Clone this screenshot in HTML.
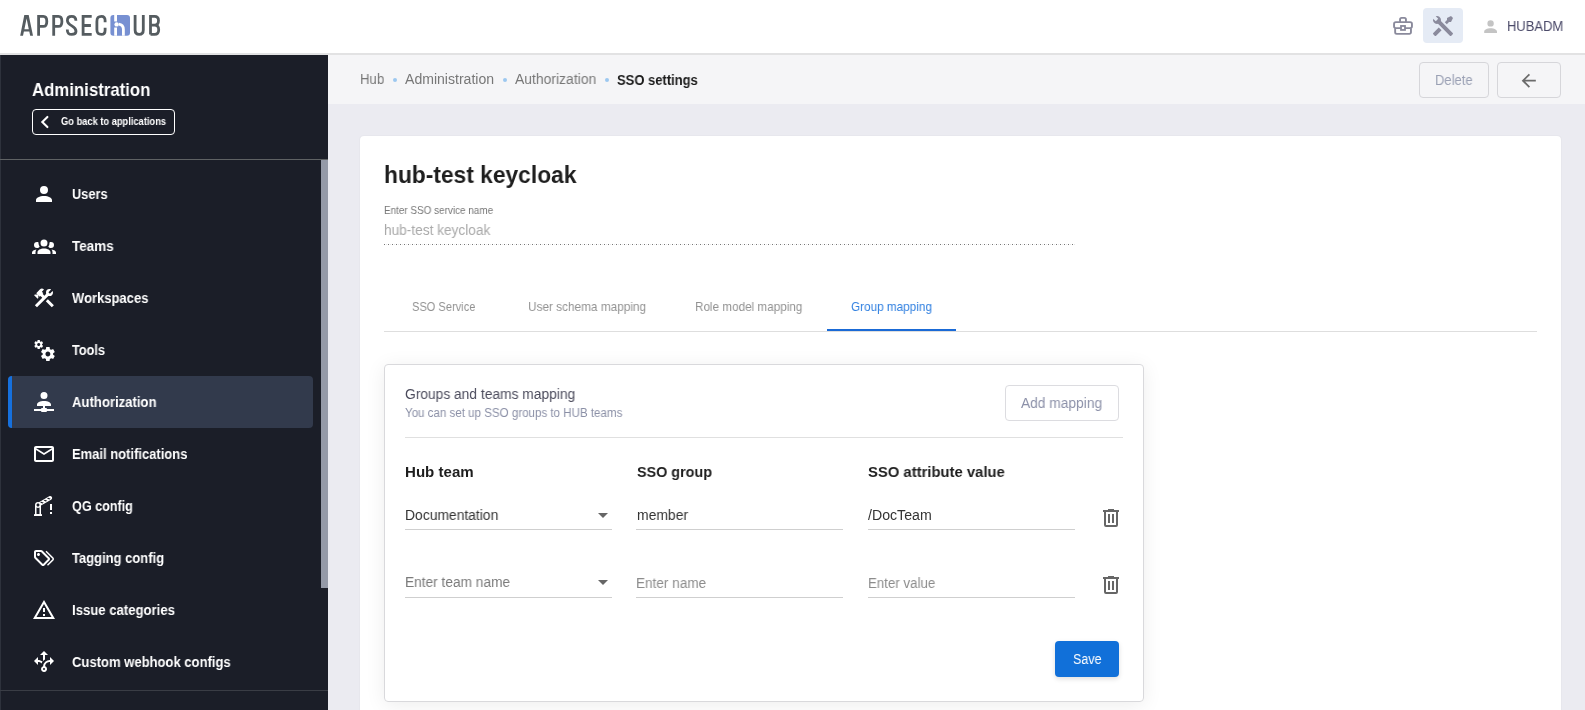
<!DOCTYPE html>
<html><head><meta charset="utf-8">
<style>
*{box-sizing:border-box;margin:0;padding:0}
html,body{width:1585px;height:710px;overflow:hidden;font-family:"Liberation Sans",sans-serif;background:#ebebf1;position:relative}
.a{position:absolute}
.t{position:absolute;white-space:nowrap;line-height:1;transform-origin:0 0;will-change:transform}
.ic{position:absolute;overflow:visible}
</style></head><body>
<!-- header -->
<div class="a" style="left:0;top:0;width:1585px;height:53px;background:#fff"></div>
<div class="a" style="left:0;top:53px;width:1585px;height:2px;background:#e2e2e3"></div>
<!-- logo -->
<svg class="a" style="left:0;top:0" width="170" height="50" viewBox="0 0 170 50">
  <path fill="#555c60" fill-rule="evenodd" d="M20.2 35.8 L24.3 15 L28.7 15 L33 35.8 L30.2 35.8 L29.3 31.6 L23.9 31.6 L23 35.8 Z M24.4 29.3 L28.8 29.3 L26.6 18.6 Z"/>
  <g fill="none" stroke="#555c60" stroke-width="2.8" stroke-linejoin="miter">
    <path d="M38.6 35.8 V16.4 H43.3 C46.4 16.4 46.8 18.6 46.8 21.4 C46.8 24.3 46.3 26.4 43.3 26.4 H38.6"/>
    <path d="M53.7 35.8 V16.4 H58.4 C61.5 16.4 61.9 18.6 61.9 21.4 C61.9 24.3 61.4 26.4 58.4 26.4 H53.7"/>
    <path d="M75.9 20.8 C75.9 17.8 74.6 16.4 71.7 16.4 C68.8 16.4 67.4 17.9 67.4 20.4 C67.4 23.1 69.4 24.4 71.9 25.9 C74.7 27.6 76 28.9 76 31.3 C76 33.9 74.5 34.4 71.7 34.4 C68.8 34.4 67.3 33.4 67.3 29.4"/>
    <path d="M91.7 16.4 H83.1 V34.4 H91.7 M83.1 25.5 H90.9"/>
    <path d="M105.1 22.3 V20.6 C105.1 17.6 104.2 16.4 101.5 16.4 C98.2 16.4 96.9 17.6 96.9 21.4 V29.6 C96.9 33.2 98.2 34.4 101.5 34.4 C104.2 34.4 105.1 33.2 105.1 30.2 V27.8"/>
    <path d="M135.1 15 V30 C135.1 33.3 136.3 34.4 139.2 34.4 C142.1 34.4 143.3 33.3 143.3 30 V15"/>
    <path d="M150.5 34.4 V16.4 H154.6 C157.5 16.4 158.5 17.9 158.5 20.5 C158.5 23.2 157.4 25.1 154.6 25.1 H150.5 M154.6 25.1 C157.8 25.1 158.7 27.2 158.7 29.8 C158.7 32.9 157.6 34.4 154.6 34.4 H150.5"/>
  </g>
  <rect x="110.4" y="15" width="19.6" height="20.8" rx="3" fill="#7790d2"/>
  <g stroke="#fff" stroke-width="2.8" fill="none">
    <path d="M115.6 15 V21.6 M115.6 27.6 V35.8"/>
    <path d="M118.8 24.1 C121.8 24.4 123.4 26.5 123.4 29.5 V35.8"/>
  </g>
  <circle cx="116.6" cy="24.4" r="2.2" fill="#fff"/>
</svg>
<!-- header right -->
<svg class="a" style="left:1380px;top:10px" width="40" height="30" viewBox="1380 10 40 30"><g fill="none" stroke="#8a8a9c" stroke-width="1.9"><path d="M1400.05 22.15 V19.4 a1.55 1.55 0 0 1 1.55 -1.55 h2.8 a1.55 1.55 0 0 1 1.55 1.55 V22.15"/><rect x="1394.05" y="22.15" width="17.9" height="6.0" rx="1.8"/><path d="M1395.15 28.15 V32.3 a1.55 1.55 0 0 0 1.55 1.55 h12.7 a1.55 1.55 0 0 0 1.55 -1.55 V28.15"/></g><rect x="1401" y="25.95" width="4" height="4" fill="#fff" stroke="#8a8a9c" stroke-width="1.8"/></svg>
<div class="a" style="left:1423px;top:8px;width:40px;height:35px;background:#e5ebf5;border-radius:4px"></div>
<svg class="ic" style="left:1431px;top:14px;width:24px;height:24px" viewBox="0 0 24 24"><path fill="#8a8a9c" d="m21.71 20.29-1.42 1.42a1 1 0 0 1-1.41 0L7 9.85A3.8 3.8 0 0 1 6 10a4 4 0 0 1-3.78-5.3l2.54 2.54.53-.53 1.42-1.42.53-.53L4.7 2.22A4 4 0 0 1 10 6a3.8 3.8 0 0 1-.15 1l11.86 11.88a1 1 0 0 1 0 1.41M2.29 18.88a1 1 0 0 0 0 1.41l1.42 1.42a1 1 0 0 0 1.41 0l5.47-5.46-2.83-2.83M20 2l-4 2v2l-2.17 2.17 2 2L18 8h2l2-4Z"/></svg>
<svg class="ic" style="left:1481.3px;top:17.2px;width:19.2px;height:19.2px" viewBox="0 0 24 24"><path fill="#c4c4c4" d="M12 4a4 4 0 0 1 4 4 4 4 0 0 1-4 4 4 4 0 0 1-4-4 4 4 0 0 1 4-4m0 10c4.42 0 8 1.79 8 4v2H4v-2c0-2.21 3.58-4 8-4"/></svg>

<!-- sidebar -->
<div class="a" style="left:0;top:55px;width:328px;height:655px;background:#1b1e28"></div>
<div class="a" style="left:0;top:55px;width:1px;height:655px;background:#2e323c"></div>
<div class="a" style="left:32px;top:109px;width:143px;height:26px;border:1px solid #fff;border-radius:4px"></div>
<svg class="a" style="left:0;top:0" width="80" height="140"><path d="M47.4 116.9 L42.3 122 L47.4 127.1" fill="none" stroke="#fff" stroke-width="2.1" stroke-linecap="round" stroke-linejoin="miter"/></svg>
<div class="a" style="left:0;top:159px;width:328px;height:1px;background:#5f6264"></div>
<div class="a" style="left:321px;top:160px;width:7px;height:428px;background:#959aa8"></div>
<div class="a" style="left:8px;top:376px;width:305px;height:52px;background:#323a4c;border-radius:4px"></div>
<div class="a" style="left:8px;top:376px;width:4px;height:52px;background:#1670dd;border-radius:4px 0 0 4px"></div>
<div class="a" style="left:0;top:690px;width:328px;height:1px;background:#3a3d45"></div>
<svg class="ic" style="left:32px;top:182px;width:24px;height:24px" viewBox="0 0 24 24"><path fill="#fff" d="M12 4a4 4 0 0 1 4 4 4 4 0 0 1-4 4 4 4 0 0 1-4-4 4 4 0 0 1 4-4m0 10c4.42 0 8 1.79 8 4v2H4v-2c0-2.21 3.58-4 8-4"/></svg>
<svg class="ic" style="left:32px;top:234px;width:24px;height:24px" viewBox="0 0 24 24"><path fill="#fff" d="M12 5.5A3.5 3.5 0 0 1 15.5 9a3.5 3.5 0 0 1-3.5 3.5A3.5 3.5 0 0 1 8.5 9 3.5 3.5 0 0 1 12 5.5M5 8c.56 0 1.08.15 1.53.42-.15 1.43.27 2.85 1.13 3.96C7.16 13.34 6.16 14 5 14a3 3 0 0 1-3-3 3 3 0 0 1 3-3m14 0a3 3 0 0 1 3 3 3 3 0 0 1-3 3c-1.16 0-2.16-.66-2.66-1.62a5.54 5.54 0 0 0 1.13-3.96c.45-.27.97-.42 1.53-.42M5.5 18.25c0-2.07 2.91-3.75 6.5-3.75s6.5 1.68 6.5 3.75V20h-13zM0 20v-1.5c0-1.39 1.89-2.56 4.45-2.9-.59.68-.95 1.62-.95 2.65V20zm24 0h-3.5v-1.75c0-1.03-.36-1.97-.95-2.65 2.56.34 4.45 1.51 4.45 2.9z"/></svg>
<svg class="ic" style="left:32px;top:286px;width:24px;height:24px" viewBox="0 0 24 24"><path fill="#fff" d="m13.78 15.3 6 6 2.11-2.16-6-6zm3.72-5.2c-.39 0-.81-.05-1.14-.19L4.97 21.25l-2.11-2.11 7.41-7.4L8.5 9.96l-.72.7-1.45-1.41v2.86l-.7.7-3.52-3.56.7-.7h2.81l-1.4-1.41 3.56-3.56a2.976 2.976 0 0 1 4.22 0L9.89 5.74l1.41 1.4-.71.71 1.79 1.78 1.82-1.88c-.14-.33-.2-.75-.2-1.12a3.49 3.49 0 0 1 3.5-3.52c.59 0 1.11.14 1.58.42L16.41 6.2l1.5 1.5 2.67-2.67c.28.47.42.97.42 1.6 0 1.92-1.55 3.47-3.5 3.47"/></svg>
<svg class="ic" style="left:32px;top:338px;width:24px;height:24px" viewBox="0 0 24 24"><path fill="#fff" d="M15.9 18.45c1.35 0 2.45-1.1 2.45-2.45s-1.1-2.45-2.45-2.45c-1.36 0-2.45 1.1-2.45 2.45s1.09 2.45 2.45 2.45m5.2-1.77 1.48 1.16c.13.11.17.29.08.45l-1.4 2.42a.35.35 0 0 1-.43.15l-1.74-.7c-.36.28-.76.51-1.18.69l-.27 1.85c-.02.17-.17.3-.34.3h-2.8c-.18 0-.32-.13-.35-.3l-.26-1.85c-.43-.18-.82-.41-1.18-.69l-1.75.7c-.15.06-.34 0-.42-.15l-1.4-2.42a.35.35 0 0 1 .08-.45l1.48-1.16-.05-.68.05-.69-1.48-1.15a.35.35 0 0 1-.08-.45l1.4-2.42c.08-.16.27-.22.42-.16l1.75.71c.36-.28.75-.52 1.18-.69l.26-1.86c.03-.16.17-.29.35-.29h2.8c.17 0 .32.13.34.29l.27 1.86c.42.17.82.41 1.18.69l1.74-.71c.17-.06.34 0 .43.16l1.4 2.42c.09.15.05.34-.08.45l-1.48 1.15.05.69zM6.69 8.07c.87 0 1.57-.7 1.57-1.57s-.7-1.58-1.57-1.58A1.58 1.58 0 0 0 5.11 6.5c0 .87.71 1.57 1.58 1.57m3.34-1.13.97.74c.07.07.09.19.03.29l-.9 1.56c-.05.1-.17.14-.27.1l-1.12-.45-.74.44-.19 1.19c-.02.11-.11.19-.22.19h-1.8c-.12 0-.21-.08-.23-.19L5.4 9.62l-.76-.44-1.14.45c-.09.04-.2 0-.26-.1l-.9-1.56c-.06-.1-.03-.22.05-.29l.95-.74-.03-.44.03-.44-.95-.74a.23.23 0 0 1-.05-.29l.9-1.56c.06-.1.17-.14.26-.1l1.13.45.77-.44.16-1.19c.02-.11.11-.19.23-.19h1.8c.11 0 .2.08.22.19L8 3.38l.74.44 1.12-.45c.1-.04.22 0 .27.1l.9 1.56c.06.1.04.22-.03.29l-.97.74.03.44z"/></svg>
<svg class="ic" style="left:32px;top:388.7px;width:24px;height:24px" viewBox="0 0 24 24"><path fill="#fff" d="M13 17v2h1a1 1 0 0 1 1 1h7v2h-7a1 1 0 0 1-1 1h-4a1 1 0 0 1-1-1H2v-2h7a1 1 0 0 1 1-1h1v-2H5v-1.5c0-1.93 3.13-3.5 7-3.5s7 1.57 7 3.5V17zM12 3a3.5 3.5 0 0 1 3.5 3.5A3.5 3.5 0 0 1 12 10a3.5 3.5 0 0 1-3.5-3.5A3.5 3.5 0 0 1 12 3"/></svg>
<svg class="ic" style="left:32px;top:442px;width:24px;height:24px" viewBox="0 0 24 24"><path fill="#fff" d="M22 6c0-1.1-.9-2-2-2H4c-1.1 0-2 .9-2 2v12c0 1.1.9 2 2 2h16c1.1 0 2-.9 2-2zm-2 0-8 5-8-5zm0 12H4V8l8 5 8-5z"/></svg>
<svg class="ic" style="left:32px;top:494px;width:24px;height:24px" viewBox="0 0 24 24"><path fill="#fff" d="M19.9 3c-.6-1-1.8-1.3-2.7-.7L6.9 8.2C6.6 8.1 6.3 8 6 8c-1.7 0-3 1.3-3 3v9c-.6 0-1 .4-1 1v1h8v-1c0-.6-.4-1-1-1v-8.4l10.1-5.8c1-.6 1.3-1.8.8-2.8M7.5 20h-3v-6.4c.9.5 2.1.5 3 0zM6 12.5c-.8 0-1.5-.7-1.5-1.5S5.2 9.5 6 9.5s1.5.7 1.5 1.5-.7 1.5-1.5 1.5m4.4-2.9-2.3-1 1.3-.8 2.3 1zm3.5-2-2.3-1 1.3-.8 2.3 1zm3.4-2-2.3-1 1.3-.8 2.3 1zM20 16h-2v-6h2zm0 4h-2v-2h2z"/></svg>
<svg class="ic" style="left:32px;top:546px;width:24px;height:24px" viewBox="0 0 24 24"><path fill="#fff" d="M6.5 10C7.3 10 8 9.3 8 8.5S7.3 7 6.5 7 5 7.7 5 8.5 5.7 10 6.5 10M9 6l7 7-5 5-7-7V6zm0-2H4c-1.1 0-2 .9-2 2v5c0 .6.2 1.1.6 1.4l7 7c.3.4.8.6 1.4.6s1.1-.2 1.4-.6l5-5c.4-.4.6-.9.6-1.4 0-.6-.2-1.1-.6-1.4l-7-7C10.1 4.2 9.6 4 9 4m4.5 1.7 1-1 6.9 6.9c.4.4.6.9.6 1.4s-.2 1.1-.6 1.4L16 19.8l-1-1 5.7-5.8z"/></svg>
<svg class="ic" style="left:32px;top:598px;width:24px;height:24px" viewBox="0 0 24 24"><path fill="#fff" d="M12 2 1 21h22M12 6l7.53 13H4.47M11 10v4h2v-4m-2 6v2h2v-2"/></svg>
<svg class="ic" style="left:32px;top:650px;width:24px;height:24px" viewBox="0 0 24 24"><path fill="#fff" d="M9.64 13.4C8.63 12.5 7.34 12.03 6 12v3l-4-4 4-4v3c1.67 0 3.3.57 4.63 1.59a8 8 0 0 0-.99 1.81M18 15v-3c-.5 0-4.5.16-4.95 4.2 1.56.55 2.38 2.27 1.83 3.83a3.006 3.006 0 0 1-3.83 1.83c-1.55-.56-2.38-2.27-1.83-3.83.28-.86.98-1.53 1.83-1.83A6.75 6.75 0 0 1 18 10V7l4 4zm-5 4a1 1 0 0 0-1-1 1 1 0 0 0-1 1 1 1 0 0 0 1 1 1 1 0 0 0 1-1m-2-7.88c.58-.66 1.25-1.23 2-1.69V5h3l-4-4-4 4h3z"/></svg>

<!-- crumb bar -->
<div class="a" style="left:328px;top:55px;width:1257px;height:49px;background:#f5f5f7"></div>
<div class="a" style="left:393px;top:77.8px;width:4.2px;height:4.2px;border-radius:50%;background:#9cc8f0"></div>
<div class="a" style="left:503px;top:77.8px;width:4.2px;height:4.2px;border-radius:50%;background:#9cc8f0"></div>
<div class="a" style="left:605px;top:77.8px;width:4.2px;height:4.2px;border-radius:50%;background:#9cc8f0"></div>
<div class="a" style="left:1419px;top:62px;width:70px;height:36px;border:1px solid #d6d6da;border-radius:4px"></div>
<div class="a" style="left:1497px;top:62px;width:64px;height:36px;border:1px solid #d6d6da;border-radius:4px"></div>
<svg class="ic" style="left:1518px;top:70px;width:21.4px;height:21.4px" viewBox="0 0 24 24"><path fill="#6b6b6b" d="M20 11v2H8l5.5 5.5-1.42 1.42L4.16 12l7.92-7.92L13.5 5.5 8 11z"/></svg>

<!-- card -->
<div class="a" style="left:360px;top:136px;width:1201px;height:620px;background:#fff;border-radius:4px;box-shadow:0 0 2px rgba(0,0,0,0.07)"></div>
<div class="a" style="left:384px;top:244px;width:692px;height:1px;background-image:linear-gradient(to right,#757575 25%,#fff 25%,#fff 50%,#e6e6e6 50%,#e6e6e6 75%,#fff 75%);background-size:4px 1px"></div>
<div class="a" style="left:384px;top:331px;width:1153px;height:1px;background:#dedede"></div>
<div class="a" style="left:827px;top:329px;width:129px;height:2px;background:#1a6ad6"></div>

<!-- mapping box -->
<div class="a" style="left:384px;top:364px;width:760px;height:338px;border:1px solid #d9d9dc;border-radius:4px;box-shadow:0 3px 20px rgba(0,0,0,0.075)"></div>
<div class="a" style="left:1005px;top:385px;width:114px;height:36px;border:1px solid #dcdce0;border-radius:4px"></div>
<div class="a" style="left:405px;top:437px;width:718px;height:1px;background:#e0e0e0"></div>
<div class="a" style="left:405px;top:529px;width:207px;height:1px;background:#cfcfcf"></div>
<div class="a" style="left:636px;top:529px;width:207px;height:1px;background:#cfcfcf"></div>
<div class="a" style="left:868px;top:529px;width:207px;height:1px;background:#cfcfcf"></div>
<div class="a" style="left:405px;top:597px;width:207px;height:1px;background:#cfcfcf"></div>
<div class="a" style="left:636px;top:597px;width:207px;height:1px;background:#cfcfcf"></div>
<div class="a" style="left:868px;top:597px;width:207px;height:1px;background:#cfcfcf"></div>
<svg class="ic" style="left:591px;top:503px;width:24px;height:24px" viewBox="0 0 24 24"><path fill="#666" d="m7 10 5 5 5-5z"/></svg>
<svg class="ic" style="left:591px;top:570px;width:24px;height:24px" viewBox="0 0 24 24"><path fill="#666" d="m7 10 5 5 5-5z"/></svg>
<svg class="ic" style="left:1099px;top:506px;width:24px;height:24px" viewBox="0 0 24 24"><path fill="#666" d="M9 3v1H4v2h1v13a2 2 0 0 0 2 2h10a2 2 0 0 0 2-2V6h1V4h-5V3zM7 6h10v13H7zm2 2v9h2V8zm4 0v9h2V8z"/></svg>
<svg class="ic" style="left:1099px;top:573px;width:24px;height:24px" viewBox="0 0 24 24"><path fill="#666" d="M9 3v1H4v2h1v13a2 2 0 0 0 2 2h10a2 2 0 0 0 2-2V6h1V4h-5V3zM7 6h10v13H7zm2 2v9h2V8zm4 0v9h2V8z"/></svg>
<div class="a" style="left:1055px;top:641px;width:64px;height:36px;background:#1170d9;border-radius:4px;box-shadow:0 2px 5px rgba(0,0,0,0.13)"></div>

<div class="t" style="left:1507.0px;top:18.95px;font-size:14px;font-weight:400;color:#4b4a69;transform:scaleX(0.9263);">HUBADM</div>
<div class="t" style="left:32.0px;top:79.91px;font-size:19px;font-weight:700;color:#fff;transform:scaleX(0.8832);">Administration</div>
<div class="t" style="left:61.1px;top:116.83px;font-size:10px;font-weight:700;color:#fff;transform:scaleX(0.9307);">Go back to applications</div>
<div class="t" style="left:72.2px;top:186.95px;font-size:14px;font-weight:700;color:#fff;transform:scaleX(0.9121);">Users</div>
<div class="t" style="left:72.2px;top:238.95px;font-size:14px;font-weight:700;color:#fff;transform:scaleX(0.9624);">Teams</div>
<div class="t" style="left:72.2px;top:290.95px;font-size:14px;font-weight:700;color:#fff;transform:scaleX(0.9291);">Workspaces</div>
<div class="t" style="left:72.2px;top:342.95px;font-size:14px;font-weight:700;color:#fff;transform:scaleX(0.9092);">Tools</div>
<div class="t" style="left:72.2px;top:394.95px;font-size:14px;font-weight:700;color:#fff;transform:scaleX(0.9366);">Authorization</div>
<div class="t" style="left:72.2px;top:446.95px;font-size:14px;font-weight:700;color:#fff;transform:scaleX(0.9271);">Email notifications</div>
<div class="t" style="left:72.2px;top:498.95px;font-size:14px;font-weight:700;color:#fff;transform:scaleX(0.8999);">QG config</div>
<div class="t" style="left:72.2px;top:550.95px;font-size:14px;font-weight:700;color:#fff;transform:scaleX(0.9277);">Tagging config</div>
<div class="t" style="left:72.2px;top:602.95px;font-size:14px;font-weight:700;color:#fff;transform:scaleX(0.9377);">Issue categories</div>
<div class="t" style="left:72.2px;top:654.95px;font-size:14px;font-weight:700;color:#fff;transform:scaleX(0.9316);">Custom webhook configs</div>
<div class="t" style="left:360.4px;top:72.05px;font-size:14px;font-weight:400;color:#777;transform:scaleX(0.9421);">Hub</div>
<div class="t" style="left:405.4px;top:72.05px;font-size:14px;font-weight:400;color:#777;transform:scaleX(1.0045);">Administration</div>
<div class="t" style="left:515.0px;top:72.25px;font-size:14px;font-weight:400;color:#777;transform:scaleX(0.9937);">Authorization</div>
<div class="t" style="left:617.0px;top:73.35px;font-size:14px;font-weight:700;color:#1b1b1b;transform:scaleX(0.9272);">SSO settings</div>
<div class="t" style="left:1435.0px;top:72.95px;font-size:14px;font-weight:400;color:#9aa0b4;transform:scaleX(0.9291);">Delete</div>
<div class="t" style="left:384.2px;top:162.78px;font-size:24px;font-weight:700;color:#1e1e1e;transform:scaleX(0.9490);">hub-test keycloak</div>
<div class="t" style="left:384.4px;top:205.01px;font-size:10.5px;font-weight:400;color:#777;transform:scaleX(0.9442);">Enter SSO service name</div>
<div class="t" style="left:384.4px;top:222.65px;font-size:14px;font-weight:400;color:#a9a9a9;transform:scaleX(0.9756);">hub-test keycloak</div>
<div class="t" style="left:412.2px;top:300.49px;font-size:13px;font-weight:400;color:#929292;transform:scaleX(0.8519);">SSO Service</div>
<div class="t" style="left:528.2px;top:300.49px;font-size:13px;font-weight:400;color:#929292;transform:scaleX(0.9080);">User schema mapping</div>
<div class="t" style="left:694.8px;top:300.49px;font-size:13px;font-weight:400;color:#929292;transform:scaleX(0.8999);">Role model mapping</div>
<div class="t" style="left:850.9px;top:300.49px;font-size:13px;font-weight:400;color:#2f7fe0;transform:scaleX(0.9026);">Group mapping</div>
<div class="t" style="left:405.3px;top:387.45px;font-size:14px;font-weight:400;color:#4b4b5c;transform:scaleX(0.9851);">Groups and teams mapping</div>
<div class="t" style="left:405.3px;top:406.84px;font-size:12px;font-weight:400;color:#8a8fa6;transform:scaleX(0.9628);">You can set up SSO groups to HUB teams</div>
<div class="t" style="left:1021.4px;top:396.25px;font-size:14px;font-weight:400;color:#8b90a8;transform:scaleX(0.9828);">Add mapping</div>
<div class="t" style="left:405.4px;top:464.20px;font-size:15px;font-weight:700;color:#1e1e1e;transform:scaleX(1.0052);">Hub team</div>
<div class="t" style="left:636.5px;top:464.20px;font-size:15px;font-weight:700;color:#1e1e1e;transform:scaleX(0.9573);">SSO group</div>
<div class="t" style="left:867.7px;top:464.20px;font-size:15px;font-weight:700;color:#1e1e1e;transform:scaleX(0.9886);">SSO attribute value</div>
<div class="t" style="left:405.4px;top:508.35px;font-size:14px;font-weight:400;color:#333;transform:scaleX(0.9907);">Documentation</div>
<div class="t" style="left:636.5px;top:508.35px;font-size:14px;font-weight:400;color:#333;transform:scaleX(0.9930);">member</div>
<div class="t" style="left:867.7px;top:508.35px;font-size:14px;font-weight:400;color:#333;transform:scaleX(1.0106);">/DocTeam</div>
<div class="t" style="left:405.0px;top:575.35px;font-size:14px;font-weight:400;color:#7a7a7a;transform:scaleX(0.9787);">Enter team name</div>
<div class="t" style="left:636.0px;top:576.45px;font-size:14px;font-weight:400;color:#8c8c8c;transform:scaleX(0.9699);">Enter name</div>
<div class="t" style="left:868.0px;top:576.45px;font-size:14px;font-weight:400;color:#8c8c8c;transform:scaleX(0.9502);">Enter value</div>
<div class="t" style="left:1072.7px;top:651.95px;font-size:14px;font-weight:400;color:#fff;transform:scaleX(0.8991);">Save</div>
</body></html>
